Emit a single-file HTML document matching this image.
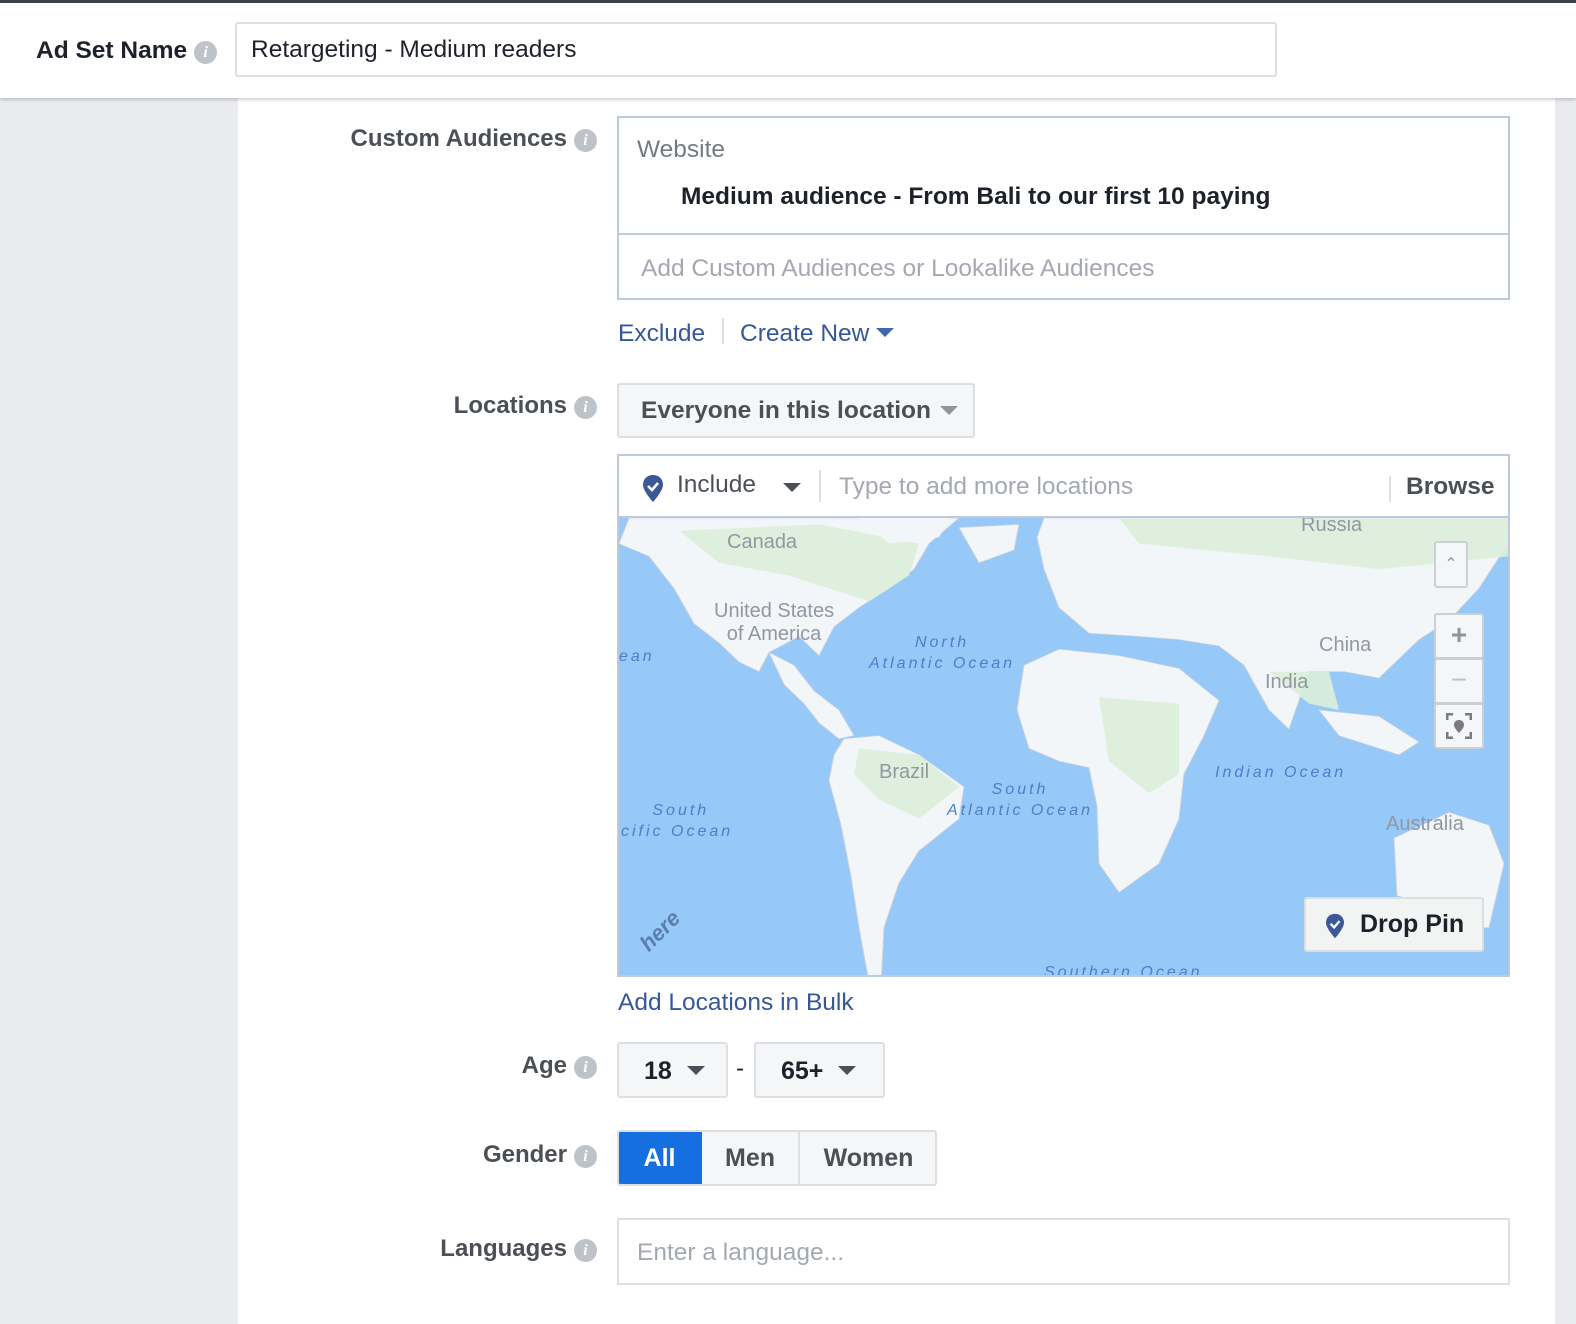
<!DOCTYPE html>
<html><head><meta charset="utf-8"><style>
*{box-sizing:border-box;margin:0;padding:0}
body{width:1576px;height:1324px;position:relative;overflow:hidden;background:#e9ebee;font-family:"Liberation Sans",sans-serif}
.a{position:absolute}
.lbl{position:absolute;right:979px;font-weight:bold;font-size:24px;color:#4b4f56;white-space:nowrap}
.info{display:inline-block;width:23px;height:23px;border-radius:50%;background:#bec3c9;color:#fff;font:italic bold 16px "Liberation Serif",serif;text-align:center;line-height:23px;vertical-align:1px;margin-left:7px}
.tri{display:inline-block;width:0;height:0;border-left:9px solid transparent;border-right:9px solid transparent;border-top:9px solid #4b4f56}
.btn{position:absolute;background:#f5f6f7;border:2px solid #dddfe2;border-radius:3px;font-weight:bold;color:#1d2129}
.ml{font-size:20px;color:#9197a3;position:absolute;white-space:nowrap}
.ocean{font-style:italic;color:#4a80c8;font-size:16px;letter-spacing:3px;position:absolute;white-space:nowrap;text-align:center;line-height:21px}
.zb{position:absolute;background:#f5f6f7;border:2px solid #ccd0d5;border-radius:3px;color:#90949c;text-align:center}
.t{font-size:24.5px}
</style></head><body>
<div class="a" style="left:238px;top:98px;width:1317px;height:1226px;background:#fff"></div>
<div class="a" style="left:0;top:0;width:1576px;height:98px;background:#fff;box-shadow:0 2px 3px rgba(0,0,0,.18)"></div>
<div class="a" style="left:0;top:0;width:1576px;height:3px;background:#3b4047"></div>
<div class="a" style="left:36px;top:37px;font-weight:bold;font-size:24.5px;color:#1d2129">Ad Set Name<span class="info">i</span></div>
<div class="a t" style="left:235px;top:22px;width:1042px;height:55px;border:2px solid #dddfe2;border-radius:3px;color:#1d2129;padding:12px 0 0 14px">Retargeting - Medium readers</div>

<div class="lbl" style="top:125px">Custom Audiences<span class="info">i</span></div>
<div class="a" style="left:617px;top:116px;width:893px;height:184px;border:2px solid #bec9dd">
 <div class="a t" style="left:18px;top:18px;color:#757a82">Website</div>
 <div class="a t" style="left:62px;top:65px;color:#1d2129;font-weight:bold">Medium audience - From Bali to our first 10 paying</div>
 <div class="a" style="left:0;top:115px;width:889px;height:2px;background:#bec9dd"></div>
 <div class="a t" style="left:22px;top:137px;color:#a4a8b0">Add Custom Audiences or Lookalike Audiences</div>
</div>
<div class="a t" style="left:618px;top:320px;color:#365899">Exclude</div>
<div class="a" style="left:722px;top:318px;width:2px;height:26px;background:#dddfe2"></div>
<div class="a t" style="left:740px;top:320px;color:#365899">Create New <span class="tri" style="border-top-color:#4267b2;vertical-align:4px"></span></div>

<div class="lbl" style="top:392px">Locations<span class="info">i</span></div>
<div class="btn t" style="left:617px;top:383px;width:358px;height:55px;color:#4b4f56;padding:12px 0 0 22px">Everyone in this location <span class="tri" style="border-top-color:#90949c;margin-left:2px;vertical-align:3px"></span></div>

<div class="a" style="left:617px;top:454px;width:893px;height:523px;border:2px solid #bec9dd;background:#fff;overflow:hidden">
 <svg class="a" style="left:22px;top:18px" width="24" height="30" viewBox="0 0 24 30"><path d="M12 1C6 1 2 5 2 11c0 6 10 17 10 17s10-11 10-17C22 5 18 1 12 1z" fill="#3b5998"/><path d="M7 12l4 4 6-7" stroke="#fff" stroke-width="2.6" fill="none"/></svg>
 <div class="a t" style="left:58px;top:15px;color:#4b4f56">Include</div>
 <div class="a" style="left:164px;top:27px"><span class="tri" style="display:block"></span></div>
 <div class="a" style="left:200px;top:14px;width:2px;height:32px;background:#dddfe2"></div>
 <div class="a t" style="left:220px;top:17px;color:#a4a8b0">Type to add more locations</div>
 <div class="a" style="left:770px;top:20px;width:2px;height:26px;background:#dddfe2"></div>
 <div class="a t" style="left:787px;top:17px;font-weight:bold;color:#4b4f56">Browse</div>
 <div class="a" style="left:0;top:60px;width:889px;height:2px;background:#bec9dd"></div>
 <div class="a" style="left:0;top:62px;width:889px;height:459px;background:#96c8f8;overflow:hidden">
  <svg width="889" height="459" viewBox="0 0 889 459" class="a" style="left:0;top:0">
   <g transform="scale(1,0.64)">
   <g fill="#f3f6f9" stroke="#cfd3dc" stroke-width="1">
    <path d="M10 0L340 0 310 40 295 80 270 110 240 140 215 170 200 215 180 185 150 210 140 240 120 225 100 195 75 165 55 110 30 60 0 40z"/>
    <path d="M150 210L175 230 195 270 220 300 235 340 220 345 200 320 185 290 165 260z"/>
    <path d="M225 345L260 340 300 370 345 420 340 470 300 520 280 570 265 640 262 730 250 725 240 640 232 560 222 480 210 410 215 370z"/>
    <path d="M425 0L889 0 889 40 860 110 830 160 800 190 780 220 760 250 725 240 690 240 670 330 650 300 625 230 600 200 560 190 520 185 470 180 440 140 425 80 418 30z"/>
    <path d="M405 230L440 205 500 215 560 235 600 285 585 340 565 400 560 470 540 540 500 585 480 540 478 450 470 390 440 380 410 360 398 300z"/>
    <path d="M775 500L830 460 870 480 885 540 870 640 840 640 800 600 778 590z"/>
    <path d="M340 15L400 10 395 50 360 70z"/>
    <path d="M700 300L760 310 800 350 780 370 720 340z"/>
   </g>
   <g fill="#dcefd9" opacity=".9">
    <path d="M60 20L200 10 300 40 290 90 250 130 170 90 100 70z"/>
    <path d="M240 360L300 370 340 420 300 470 260 440 235 400z"/>
    <path d="M480 280L560 290 560 400 530 430 490 380z"/>
    <path d="M500 0L889 0 889 60 760 80 650 60 520 40z"/>
    <path d="M650 240L710 240 720 300 690 290z"/>
   </g>
   <g fill="#f3f6f9"><path d="M240 0L330 0 320 30 270 40z"/></g>
   </g>
  </svg>
  <div class="ml" style="left:108px;top:13px">Canada</div>
  <div class="ml" style="left:95px;top:82px;line-height:23px;text-align:center">United States<br>of America</div>
  <div class="ml" style="left:682px;top:-4px">Russia</div>
  <div class="ml" style="left:700px;top:116px">China</div>
  <div class="ml" style="left:646px;top:153px">India</div>
  <div class="ml" style="left:260px;top:243px">Brazil</div>
  <div class="ml" style="left:767px;top:295px">Australia</div>
  <div class="ocean" style="left:250px;top:114px">North<br>Atlantic Ocean</div>
  <div class="ocean" style="left:328px;top:261px">South<br>Atlantic Ocean</div>
  <div class="ocean" style="left:596px;top:244px">Indian Ocean</div>
  <div class="ocean" style="left:2px;top:282px">&nbsp;South<br>cific Ocean</div>
  <div class="ocean" style="left:0;top:128px">ean</div>
  <div class="ocean" style="left:425px;top:444px">Southern Ocean</div>
  <div class="a" style="left:18px;top:400px;transform:rotate(-45deg);font:bold italic 22px 'Liberation Sans',sans-serif;color:#5a7fae">here</div>
  <div class="zb" style="left:815px;top:23px;width:34px;height:47px;font-size:16px;line-height:44px">&#8963;</div>
  <div class="zb" style="left:815px;top:95px;width:50px;height:46px;font-size:28px;line-height:40px;font-weight:bold">+</div>
  <div class="zb" style="left:815px;top:140px;width:50px;height:46px;font-size:28px;line-height:40px;color:#bec3c9">−</div>
  <div class="zb" style="left:815px;top:185px;width:50px;height:46px"><svg width="26" height="26" viewBox="0 0 26 26" style="margin-top:8px"><path d="M1 7V1h6M19 1h6v6M25 19v6h-6M7 25H1v-6" stroke="#7d7a80" stroke-width="3" fill="none"/><path d="M13 7c-3 0-5 2-5 5 0 3 5 8 5 8s5-5 5-8c0-3-2-5-5-5z" fill="#7d7a80"/></svg></div>
  <div class="a" style="left:685px;top:379px;width:180px;height:55px;background:#f2f3f3;border:2px solid #dcdfe2;border-radius:3px">
   <svg class="a" style="left:18px;top:14px" width="22" height="27" viewBox="0 0 24 30"><path d="M12 1C6 1 2 5 2 11c0 6 10 17 10 17s10-11 10-17C22 5 18 1 12 1z" fill="#3b5998"/><path d="M7 12l4 4 6-7" stroke="#fff" stroke-width="2.6" fill="none"/></svg>
   <div class="a" style="left:54px;top:11px;font-size:25px;font-weight:bold;color:#1d2129">Drop Pin</div>
  </div>
 </div>
</div>
<div class="a t" style="left:618px;top:989px;color:#365899">Add Locations in Bulk</div>

<div class="lbl" style="top:1052px">Age<span class="info">i</span></div>
<div class="btn" style="left:617px;top:1042px;width:111px;height:56px;font-size:25px;padding:13px 0 0 25px">18 <span class="tri" style="margin-left:8px;vertical-align:4px"></span></div>
<div class="a t" style="left:736px;top:1055px;color:#1d2129">-</div>
<div class="btn" style="left:754px;top:1042px;width:131px;height:56px;font-size:25px;padding:13px 0 0 25px">65+ <span class="tri" style="margin-left:8px;vertical-align:4px"></span></div>

<div class="lbl" style="top:1141px">Gender<span class="info">i</span></div>
<div class="a" style="left:617px;top:1130px;width:320px;height:56px;border:2px solid #dddfe2;border-radius:3px;background:#f5f6f7;overflow:hidden">
 <div class="a" style="left:-2px;top:-2px;width:85px;height:56px;background:#166fe0;color:#fff;font-weight:bold;font-size:25px;text-align:center;line-height:56px">All</div>
 <div class="a" style="left:83px;top:0;width:98px;height:52px;border-right:2px solid #dddfe2;color:#4b4f56;font-weight:bold;font-size:25px;text-align:center;line-height:52px">Men</div>
 <div class="a" style="left:181px;top:0;width:137px;height:52px;color:#4b4f56;font-weight:bold;font-size:25px;text-align:center;line-height:52px">Women</div>
</div>

<div class="lbl" style="top:1235px">Languages<span class="info">i</span></div>
<div class="a t" style="left:617px;top:1218px;width:893px;height:67px;border:2px solid #dddfe2;color:#a4a8b0;padding:19px 0 0 18px">Enter a language...</div>
</body></html>
